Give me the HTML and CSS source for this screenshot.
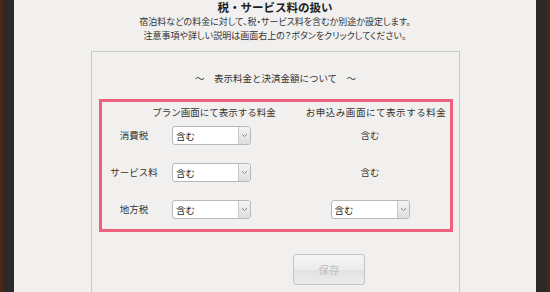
FILE: index.html
```html
<!DOCTYPE html>
<html lang="ja">
<head>
<meta charset="utf-8">
<link rel="stylesheet" href="styles.css">
</head>
<body>
<div class="frame">
  <div class="edge edge-l"><span class="wood"></span><span class="dark"></span></div>
  <main class="main">
    <h1 class="title">税・サービス料の扱い</h1>
    <p class="desc">宿泊料などの料金に対して、税・サービス料を含むか別途か設定します。<br>注意事項や詳しい説明は画面右上の？ボタンをクリックしてください。</p>
    <section class="panel">
      <h2 class="sec-title">～　表示料金と決済金額について　～</h2>
      <div class="box">
        <div class="grid">
          <div></div>
          <div class="head c1 h1">プラン画面にて表示する料金</div>
          <div class="head c2 h2">お申込み画面にて表示する料金</div>

          <div class="label">消費税</div>
          <div class="c1"><div class="sel"><select><option>含む</option></select><span class="arrow"><svg width="7" height="5" viewBox="0 0 7 5"><path d="M1 1.2 L3.5 3.6 L6 1.2" fill="none" stroke="#8a8a8a" stroke-width="1"/></svg></span></div></div>
          <div class="c2 val">含む</div>

          <div class="label">サービス料</div>
          <div class="c1"><div class="sel"><select><option>含む</option></select><span class="arrow"><svg width="7" height="5" viewBox="0 0 7 5"><path d="M1 1.2 L3.5 3.6 L6 1.2" fill="none" stroke="#8a8a8a" stroke-width="1"/></svg></span></div></div>
          <div class="c2 val">含む</div>

          <div class="label">地方税</div>
          <div class="c1"><div class="sel"><select><option>含む</option></select><span class="arrow"><svg width="7" height="5" viewBox="0 0 7 5"><path d="M1 1.2 L3.5 3.6 L6 1.2" fill="none" stroke="#8a8a8a" stroke-width="1"/></svg></span></div></div>
          <div class="c2"><div class="sel"><select><option>含む</option></select><span class="arrow"><svg width="7" height="5" viewBox="0 0 7 5"><path d="M1 1.2 L3.5 3.6 L6 1.2" fill="none" stroke="#8a8a8a" stroke-width="1"/></svg></span></div></div>
        </div>
      </div>
      <div class="actions"><button class="save" disabled>保存</button></div>
    </section>
  </main>
  <div class="edge edge-r"><span class="dark"></span><span class="wood"></span></div>
</div>
</body>
</html>
```

FILE: styles.css
```css
html, body {
  margin: 0;
  padding: 0;
  height: 100%;
  overflow: hidden;
}
body {
  font-family: "Noto Sans CJK JP", "Noto Sans", sans-serif;
  color: #2b2b2b;
  background: #f1f0ee;
}
.frame {
  display: flex;
  height: 100%;
}
.edge {
  display: flex;
  width: 14px;
  flex: none;
}
.wood {
  width: 3px;
  background: #4a2818;
}
.dark {
  flex: 1;
  background: #2b2a29;
}
.main {
  flex: 1;
  background: #f1f0ee;
}
.title {
  margin: 0;
  font-size: 11.5px;
  line-height: 15px;
  font-weight: bold;
  text-align: center;
  color: #1e1e1e;
}
.desc {
  margin: 0;
  font-size: 9px;
  line-height: 13.5px;
  text-align: center;
  font-feature-settings: "palt";
  color: #333;
}
.panel {
  margin: 9px 76px 0 77px;
  border: 1px solid #c9c9c8;
  padding: 18px 0 40px;
}
.sec-title {
  margin: 0;
  font-size: 9.5px;
  line-height: 16px;
  font-weight: normal;
  text-align: center;
  color: #333;
}
.box {
  margin: 13px 6px 0 7px;
  border: 3px solid #f0607f;
  padding: 2px 0 10px;
}
.grid {
  display: grid;
  grid-template-columns: 64px 91px 193px;
  grid-template-rows: 22px 37px 37px 19px;
  align-items: start;
  font-size: 9.5px;
}
.head {
  line-height: 16px;
  text-align: center;
  color: #333;
  white-space: nowrap;
}
.h1 {
  padding-left: 5px;
}
.h2 {
  padding-left: 12px;
  letter-spacing: 0.55px;
}
.c1 {
  display: flex;
  justify-content: center;
}
.c2 {
  display: flex;
  justify-content: center;
  margin-left: 33px;
}
.label {
  line-height: 19px;
  text-align: center;
  color: #333;
}
.val {
  line-height: 19px;
  color: #333;
}
.sel {
  display: flex;
  width: 79px;
  height: 19px;
  box-sizing: border-box;
  border: 1px solid #b8b8b8;
  border-radius: 3px;
  background: #fff;
  overflow: hidden;
}
.sel select {
  flex: 1;
  min-width: 0;
  appearance: none;
  -webkit-appearance: none;
  border: none;
  background: transparent;
  font-family: inherit;
  font-size: 9.5px;
  color: #222;
  padding: 0 0 0 3px;
  margin: 0;
  height: 17px;
  outline: none;
}
.arrow {
  width: 11px;
  flex: none;
  border-left: 1px solid #c8c8c8;
  background: linear-gradient(#f4f4f4, #dedede);
  display: flex;
  align-items: center;
  justify-content: center;
}
.actions {
  display: flex;
  justify-content: flex-start;
  padding-left: 201px;
  margin-top: 22px;
}
.save {
  width: 72px;
  height: 31px;
  border: 1px solid #c4c4c4;
  border-radius: 3px;
  background: linear-gradient(#f6f6f6, #ececec 50%, #e2e2e2 52%, #ececec);
  color: #bdbdbd;
  font-family: inherit;
  font-size: 10.5px;
  padding: 0;
}
```
